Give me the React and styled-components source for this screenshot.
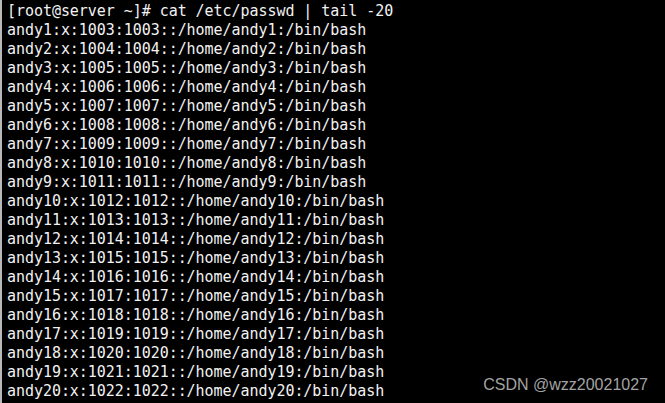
import styled, { createGlobalStyle } from 'styled-components';

const GlobalStyle = createGlobalStyle`
  html, body {
    margin: 0;
    padding: 0;
    background: #000;
  }
`;

const lines = Array.from({ length: 20 }, (_, i) => {
  const n = i + 1;
  const id = 1002 + n;
  return `andy${n}:x:${id}:${id}::/home/andy${n}:/bin/bash`;
});

export default function App() {
  return (
    <>
      <GlobalStyle />
      <Terminal>
        <Output>
          <Line>[root@server ~]# cat /etc/passwd | tail -20</Line>
          {lines.map((l) => (
            <Line key={l}>{l}</Line>
          ))}
        </Output>
        <Watermark>CSDN @wzz20021027</Watermark>
      </Terminal>
    </>
  );
}

const Terminal = styled.div`
  position: relative;
  width: 665px;
  height: 403px;
  background: #000;
  border-left: 2px solid #b8b8b8;
  box-sizing: border-box;
  overflow: hidden;
`;

const Output = styled.div`
  padding: 2px 0 0 5px;
  font-family: "DejaVu Sans Mono", monospace;
  font-size: 15px;
  line-height: 19px;
  letter-spacing: -0.05px;
  color: #f2f2f2;
`;

const Line = styled.div`
  white-space: pre;
`;

const Watermark = styled.div`
  position: absolute;
  right: 17px;
  bottom: 9px;
  font-family: "Liberation Sans", Arial, sans-serif;
  font-size: 16px;
  color: #a3a3a3;
`;
